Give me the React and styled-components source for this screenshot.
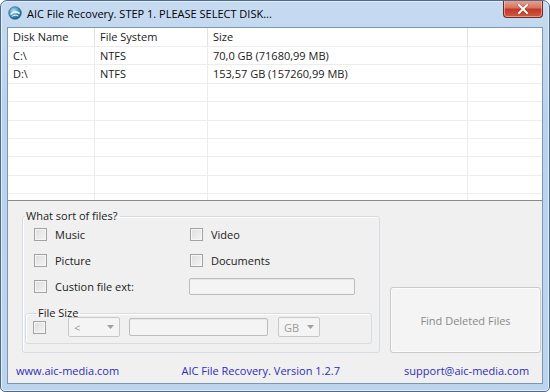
import React from 'react';
import styled, { createGlobalStyle } from 'styled-components';

const GlobalStyle = createGlobalStyle`
  html, body {
    margin: 0;
    padding: 0;
    background: #ffffff;
  }
  body {
    font-family: "Open Sans", "Noto Sans", "Liberation Sans", sans-serif;
    font-size: 11px;
    color: #1a1a1a;
  }
`;

const Window = styled.div`
  width: 550px;
  height: 392px;
  box-sizing: border-box;
  border: 1px solid #4f6b8c;
  border-radius: 7px 7px 5px 5px;
  background: linear-gradient(180deg, #c6dbf1 0%, #b9d2ee 30%, #bcd5ef 100%);
  box-shadow: inset 0 0 0 1px #e3eefa;
  display: flex;
  flex-direction: column;
  overflow: hidden;
`;

const TitleBar = styled.div`
  height: 26px;
  display: flex;
  align-items: flex-start;
  padding: 0 6px 0 7px;
`;

const AppIcon = styled.svg`
  width: 14px;
  height: 14px;
  margin-top: 5px;
  flex-shrink: 0;
`;

const Title = styled.div`
  margin-left: 5px;
  margin-top: 5px;
  font-size: 11px;
  line-height: 16px;
  color: #000;
  flex: 1;
`;

const CloseButton = styled.div`
  width: 40px;
  height: 18px;
  margin-top: -1px;
  box-sizing: border-box;
  border: 1px solid #6b2a24;
  border-top: none;
  border-radius: 0 0 4px 4px;
  background: linear-gradient(180deg, #e8a898 0%, #d8735f 45%, #c1392a 55%, #cf5a3e 100%);
  box-shadow: inset 0 0 0 1px rgba(255, 220, 210, 0.5);
  display: flex;
  align-items: center;
  justify-content: center;
`;

const Client = styled.div`
  flex: 1;
  margin: 0 6px 7px 6px;
  border: 1px solid #8096b0;
  background: #f0f0f0;
  display: flex;
  flex-direction: column;
`;

const ListView = styled.div`
  height: 172px;
  background: #fff;
  border-bottom: 1px solid #8a8a8a;
  overflow: hidden;
`;

const Row = styled.div`
  display: grid;
  grid-template-columns: 87px 113px 260px 1fr;
  height: ${(p) => (p.$header ? 19 : 18.4)}px;
  box-sizing: border-box;
  border-bottom: 1px solid #ededed;
`;

const Cell = styled.div`
  border-right: 1px solid ${(p) => (p.$header ? '#e2e2e2' : '#ededed')};
  padding-left: 5px;
  line-height: 18px;
  white-space: nowrap;
  color: #1a1a1a;
  &:last-child {
    border-right: none;
  }
`;

const Panel = styled.div`
  flex: 1;
  display: grid;
  grid-template-columns: 358px 1fr;
  grid-template-rows: 1fr 26px;
  padding: 7px 0 0 14px;
`;

const GroupBox = styled.fieldset`
  margin: 0 0 4px;
  padding: 0 7px 2px 2px;
  border: 1px solid #d5dce3;
  border-radius: 3px;
  box-shadow: inset 1px 1px 0 #fff;
  min-width: 0;
`;

const Legend = styled.legend`
  padding: 0 2px 0 1px;
  margin-left: ${(p) => p.$offset || 0}px;
  line-height: 16px;
  color: #1a1a1a;
`;

const OptionsGrid = styled.div`
  display: grid;
  grid-template-columns: 156px 1fr;
  grid-auto-rows: 26px;
  margin-top: -3px;
  padding-left: 9px;
`;

const Option = styled.label`
  display: flex;
  align-items: center;
  gap: 8px;
`;

const Check = styled.span`
  width: 11px;
  height: 11px;
  flex-shrink: 0;
  border: 1px solid #a2a2a2;
  background: linear-gradient(135deg, #dedede 0%, #f4f4f4 100%);
  box-shadow: inset 0 0 0 1px #f6f6f6;
`;

const TextBox = styled.div`
  width: ${(p) => p.$w}px;
  height: ${(p) => p.$h || 17}px;
  box-sizing: border-box;
  border: 1px solid #bdbdbd;
  border-radius: 2px;
  background: #f4f4f4;
  box-shadow: inset 0 1px 0 #e6e6e6;
`;

const ExtBox = styled(TextBox)`
  margin-left: -1px;
  align-self: center;
`;

const SizeBox = styled(GroupBox)`
  margin: 6px 0 0;
  padding: 0 6px 5px 7px;
`;

const SizeRow = styled.div`
  display: flex;
  align-items: center;
  margin-top: -5px;
  height: 22px;
`;

const Select = styled.div`
  width: ${(p) => p.$w}px;
  height: 20px;
  box-sizing: border-box;
  border: 1px solid #c8c8c8;
  border-radius: 2px;
  background: #f4f4f4;
  margin-left: ${(p) => p.$ml || 0}px;
  display: flex;
  align-items: center;
  justify-content: space-between;
  padding: 0 5px 0 5px;
  color: #9a9a9a;
  font-size: 11px;
`;

const Arrow = styled.svg`
  width: 7px;
  height: 4px;
`;

const SizeInput = styled(TextBox)`
  margin-left: 9px;
`;

const Side = styled.div`
  display: flex;
  flex-direction: column;
  justify-content: flex-end;
  padding: 0 0 0 10px;
`;

const FindButton = styled.button`
  height: 66px;
  width: 151px;
  margin-bottom: 4px;
  border: 1px solid #c9c9c9;
  border-radius: 3px;
  background: #f4f4f4;
  color: #8a8a8a;
  font-family: inherit;
  font-size: 11px;
  padding: 0;
  box-shadow: inset 0 0 0 1px #fbfbfb;
`;

const Footer = styled.div`
  grid-column: 1 / -1;
  display: flex;
  align-items: center;
  color: #2d2db8;
  margin-left: -6px;
`;

const FooterLink = styled.span`
  width: ${(p) => p.$w}px;
  white-space: nowrap;
`;

const disks = [
  { name: 'C:\\', fs: 'NTFS', size: '70,0 GB (71680,99 MB)' },
  { name: 'D:\\', fs: 'NTFS', size: '153,57 GB (157260,99 MB)' },
];

const emptyRows = Array.from({ length: 7 });

export default function App() {
  return (
    <>
      <GlobalStyle />
      <Window>
        <TitleBar>
          <AppIcon viewBox="0 0 14 14">
            <defs>
              <radialGradient id="ic" cx="40%" cy="35%" r="70%">
                <stop offset="0%" stopColor="#bfe6f5" />
                <stop offset="60%" stopColor="#3f8fb8" />
                <stop offset="100%" stopColor="#1d5279" />
              </radialGradient>
            </defs>
            <circle cx="7" cy="7" r="6.3" fill="url(#ic)" stroke="#2b5a7a" strokeWidth="0.6" />
            <path d="M3 8.2 C4.5 5.8 8.5 5.4 11.2 7.2" stroke="#fff" strokeWidth="1.4" fill="none" strokeLinecap="round" />
            <path d="M4.2 10.2 C6 9 8.5 9 10 9.8" stroke="#e8f6ff" strokeWidth="1" fill="none" strokeLinecap="round" />
          </AppIcon>
          <Title>AIC File Recovery. STEP 1. PLEASE SELECT DISK...</Title>
          <CloseButton>
            <svg width="12" height="10" viewBox="0 0 12 10">
              <path d="M2 1 L10 9 M10 1 L2 9" stroke="#5a1a12" strokeWidth="3" strokeLinecap="square" opacity="0.45" />
              <path d="M2 1 L10 9 M10 1 L2 9" stroke="#fff" strokeWidth="2" strokeLinecap="square" />
            </svg>
          </CloseButton>
        </TitleBar>
        <Client>
          <ListView>
            <Row $header>
              <Cell $header>Disk Name</Cell>
              <Cell $header>File System</Cell>
              <Cell $header>Size</Cell>
              <Cell $header />
            </Row>
            {disks.map((d) => (
              <Row key={d.name}>
                <Cell>{d.name}</Cell>
                <Cell>{d.fs}</Cell>
                <Cell>{d.size}</Cell>
                <Cell />
              </Row>
            ))}
            {emptyRows.map((_, i) => (
              <Row key={i}>
                <Cell />
                <Cell />
                <Cell />
                <Cell />
              </Row>
            ))}
          </ListView>
          <Panel>
            <GroupBox>
              <Legend>What sort of files?</Legend>
              <OptionsGrid>
                <Option><Check />Music</Option>
                <Option><Check />Video</Option>
                <Option><Check />Picture</Option>
                <Option><Check />Documents</Option>
                <Option><Check />Custion file ext:</Option>
                <ExtBox $w={166} />
              </OptionsGrid>
              <SizeBox>
                <Legend $offset={4}>File Size</Legend>
                <SizeRow>
                  <Check />
                  <Select $w={52} $ml={22}>
                    <span>&lt;</span>
                    <Arrow viewBox="0 0 7 4"><path d="M0 0 L7 0 L3.5 4 Z" fill="#a0a0a0" /></Arrow>
                  </Select>
                  <SizeInput $w={139} $h={18} />
                  <Select $w={42} $ml={10}>
                    <span>GB</span>
                    <Arrow viewBox="0 0 7 4"><path d="M0 0 L7 0 L3.5 4 Z" fill="#a0a0a0" /></Arrow>
                  </Select>
                </SizeRow>
              </SizeBox>
            </GroupBox>
            <Side>
              <FindButton disabled>Find Deleted Files</FindButton>
            </Side>
            <Footer>
              <FooterLink $w={168}>www.aic-media.com</FooterLink>
              <FooterLink $w={226}>AIC File Recovery. Version 1.2.7</FooterLink>
              <FooterLink $w={140}>support@aic-media.com</FooterLink>
            </Footer>
          </Panel>
        </Client>
      </Window>
    </>
  );
}
